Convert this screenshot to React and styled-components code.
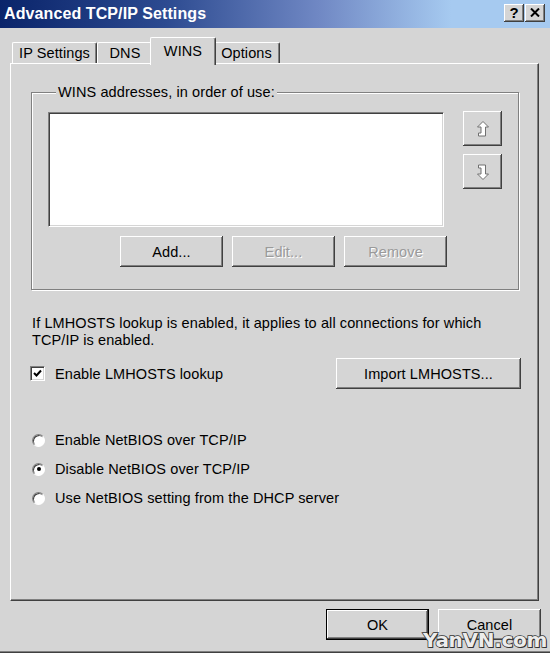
import React, { useState } from "react";
import styled, { createGlobalStyle } from "styled-components";

const GlobalStyle = createGlobalStyle`
  body {
    margin: 0;
    background: #d5d5d5;
  }
`;

const Window = styled.div`
  position: relative;
  width: 550px;
  height: 653px;
  box-sizing: border-box;
  background: #d5d5d5;
  font-family: "Liberation Sans", Arial, sans-serif;
  font-size: 14.5px;
  letter-spacing: 0.1px;
  color: #000;
  display: flex;
  flex-direction: column;
  box-shadow: inset 0 -1px 0 #404040, inset 0 -2px 0 #808080;
  overflow: hidden;
`;

const TitleBar = styled.div`
  height: 28px;
  flex-shrink: 0;
  display: flex;
  align-items: center;
  justify-content: space-between;
  padding: 0 5px 0 4px;
  background: linear-gradient(90deg, #0a246a 0%, #2c4a90 30%, #7088c4 58%, #a6caf0 82%, #a6caf0 100%);
`;

const Title = styled.span`
  color: #fff;
  font-weight: bold;
  font-size: 16px;
  letter-spacing: 0.1px;
`;

const CaptionButtons = styled.div`
  display: flex;
  align-items: center;
  margin-top: -3px;
`;

const CaptionButton = styled.button`
  width: 20px;
  height: 18px;
  padding: 0;
  margin-left: ${(p) => (p.$gap ? "1px" : "0")};
  border: none;
  background: #d5d5d5;
  box-shadow: inset -1px -1px 0 #404040, inset 1px 1px 0 #fff,
    inset -2px -2px 0 #808080;
  display: flex;
  align-items: center;
  justify-content: center;
  font-family: "Liberation Sans", Arial, sans-serif;
  font-weight: bold;
  font-size: 15px;
  color: #000;
`;

const Body = styled.div`
  flex: 1;
  display: flex;
  flex-direction: column;
  padding: 9px 10px 0 10px;
`;

const TabStrip = styled.div`
  height: 26px;
  display: flex;
  align-items: flex-end;
  padding-left: 2px;
  position: relative;
  z-index: 1;
`;

const Tab = styled.div`
  box-sizing: border-box;
  width: ${(p) => p.$w}px;
  height: ${(p) => (p.$active ? 28 : 21)}px;
  margin: ${(p) => (p.$active ? "0 -2px -2px -2px" : "0")};
  padding: ${(p) => (p.$active ? "2px 0 4px 0" : "0")};
  display: flex;
  align-items: center;
  justify-content: center;
  background: #d5d5d5;
  border-top: 1px solid #fff;
  border-left: ${(p) => (p.$noLeft ? "none" : "1px solid #fff")};
  border-right: ${(p) => (p.$noRight ? "none" : "1px solid #404040")};
  box-shadow: ${(p) => (p.$noRight ? "none" : "inset -1px 0 0 #808080")};
  border-radius: 2px 2px 0 0;
  position: relative;
  z-index: ${(p) => (p.$active ? 2 : 1)};
`;

const Panel = styled.div`
  box-sizing: border-box;
  height: 538px;
  width: 529px;
  border-top: 1px solid #fff;
  border-left: 1px solid #fff;
  border-right: 1px solid #404040;
  border-bottom: 1px solid #404040;
  box-shadow: inset -1px -1px 0 #808080;
  padding: 20px 19px 0 20px;
  display: flex;
  flex-direction: column;
`;

const Group = styled.fieldset`
  margin: 0;
  padding: 12px 15px 22px 16px;
  border: 1px solid #808080;
  box-shadow: inset 1px 1px 0 #fff, 1px 1px 0 #fff;
  min-width: 0;
`;

const Legend = styled.legend`
  margin-left: 8px;
  padding: 0 2px;
  background: #d5d5d5;
  line-height: 16px;
  position: relative;
`;

const GroupRow = styled.div`
  display: flex;
  gap: 19px;
  align-items: flex-start;
`;

const ListColumn = styled.div`
  display: flex;
  flex-direction: column;
`;

const ListBox = styled.div`
  box-sizing: border-box;
  width: 396px;
  height: 115px;
  background: #fff;
  border-top: 1px solid #808080;
  border-left: 1px solid #808080;
  border-right: 1px solid #fff;
  border-bottom: 1px solid #fff;
  box-shadow: inset 1px 1px 0 #404040, inset -1px -1px 0 #d5d5d5;
`;

const ListButtons = styled.div`
  display: flex;
  justify-content: flex-end;
  gap: 9px;
  margin-top: 9px;
  margin-right: -3px;
`;

const SideButtons = styled.div`
  display: flex;
  flex-direction: column;
  gap: 8px;
  margin-top: -1px;
`;

const Button = styled.button`
  box-sizing: border-box;
  width: ${(p) => p.$w || 103}px;
  height: ${(p) => p.$h || 31}px;
  padding: 0;
  background: #d5d5d5;
  border: ${(p) => (p.$default ? "1px solid #000" : "none")};
  box-shadow: inset -1px -1px 0 #404040, inset 1px 1px 0 #fff,
    inset -2px -2px 0 #808080;
  font-family: "Liberation Sans", Arial, sans-serif;
  font-size: 14.5px;
  letter-spacing: 0.1px;
  color: ${(p) => (p.$disabled ? "#9a9a9a" : "#000")};
  text-shadow: ${(p) => (p.$disabled ? "1px 1px 0 #fff" : "none")};
  display: flex;
  align-items: center;
  justify-content: center;
`;

const Note = styled.p`
  margin: 25px 0 0 1px;
  line-height: 17px;
`;

const CheckRow = styled.div`
  display: flex;
  align-items: center;
  justify-content: space-between;
  margin-top: 9px;
  margin-right: -2px;
`;

const Option = styled.label`
  display: flex;
  align-items: center;
  gap: 10px;
  height: 20px;
`;

const CheckBox = styled.span`
  box-sizing: border-box;
  width: 15px;
  height: 15px;
  margin-left: -1px;
  background: #fff;
  border-top: 1px solid #808080;
  border-left: 1px solid #808080;
  border-right: 1px solid #fff;
  border-bottom: 1px solid #fff;
  box-shadow: inset 1px 1px 0 #404040, inset -1px -1px 0 #d5d5d5;
  display: flex;
  align-items: center;
  justify-content: center;
`;

const Radios = styled.div`
  display: flex;
  flex-direction: column;
  gap: 9px;
  margin-top: 41px;
  padding-left: 1px;
`;

const RadioDot = styled.span`
  box-sizing: border-box;
  width: 13px;
  height: 13px;
  border-radius: 50%;
  background: #fff;
  border: 1px solid;
  border-color: #808080 #fff #fff #808080;
  box-shadow: inset 1px 1px 0 #404040;
  display: flex;
  align-items: center;
  justify-content: center;
  &::after {
    content: "";
    width: 4px;
    height: 4px;
    border-radius: 50%;
    background: ${(p) => (p.$checked ? "#000" : "transparent")};
  }
`;

const Footer = styled.div`
  display: flex;
  justify-content: flex-end;
  gap: 9px;
  margin-top: 8px;
  margin-right: -1px;
`;

const Watermark = styled.div`
  position: absolute;
  right: 3px;
  bottom: 3px;
  font-family: "DejaVu Sans", sans-serif;
  font-weight: bold;
  font-size: 20px;
  line-height: 20px;
  letter-spacing: -0.3px;
  color: #ececec;
  -webkit-text-stroke: 1.5px #333;
  paint-order: stroke fill;
  text-shadow: 1px 1px 0 #333;
  pointer-events: none;
`;

const UpIcon = () => (
  <svg width="18" height="18" viewBox="0 0 18 18">
    <polygon
      points="9,1.5 14.5,7 11.5,7 11.5,16 4.5,16 4.5,13 7,13 7,7 3.5,7"
      fill="#fff"
      stroke="#707070"
      strokeWidth="1"
    />
  </svg>
);

const DownIcon = () => (
  <svg width="18" height="18" viewBox="0 0 18 18">
    <polygon
      points="4.5,2 11.5,2 11.5,11 14.5,11 9,16.5 3.5,11 7,11 7,5 4.5,5"
      fill="#fff"
      stroke="#707070"
      strokeWidth="1"
    />
  </svg>
);

const tabs = [
  { label: "IP Settings", w: 85 },
  { label: "DNS", w: 55, noRight: true },
  { label: "WINS", w: 66, active: true },
  { label: "Options", w: 66, noLeft: true },
];

const netbios = [
  "Enable NetBIOS over TCP/IP",
  "Disable NetBIOS over TCP/IP",
  "Use NetBIOS setting from the DHCP server",
];

export default function App() {
  const [choice, setChoice] = useState(1);
  const [lmhosts, setLmhosts] = useState(true);

  return (
    <Window>
      <GlobalStyle />
      <TitleBar>
        <Title>Advanced TCP/IP Settings</Title>
        <CaptionButtons>
          <CaptionButton>?</CaptionButton>
          <CaptionButton $gap>
            <svg width="10" height="9" viewBox="0 0 10 9">
              <path d="M1 0.5 L9 8.5 M9 0.5 L1 8.5" stroke="#000" strokeWidth="2" />
            </svg>
          </CaptionButton>
        </CaptionButtons>
      </TitleBar>
      <Body>
        <TabStrip>
          {tabs.map((t) => (
            <Tab
              key={t.label}
              $w={t.w}
              $active={t.active}
              $noRight={t.noRight}
              $noLeft={t.noLeft}
            >
              {t.label}
            </Tab>
          ))}
        </TabStrip>
        <Panel>
          <Group>
            <Legend>WINS addresses, in order of use:</Legend>
            <GroupRow>
              <ListColumn>
                <ListBox />
                <ListButtons>
                  <Button>Add...</Button>
                  <Button $disabled>Edit...</Button>
                  <Button $disabled>Remove</Button>
                </ListButtons>
              </ListColumn>
              <SideButtons>
                <Button $w={39} $h={35}>
                  <UpIcon />
                </Button>
                <Button $w={39} $h={35}>
                  <DownIcon />
                </Button>
              </SideButtons>
            </GroupRow>
          </Group>
          <Note>
            If LMHOSTS lookup is enabled, it applies to all connections for which
            <br />
            TCP/IP is enabled.
          </Note>
          <CheckRow>
            <Option onClick={() => setLmhosts(!lmhosts)}>
              <CheckBox>
                {lmhosts && (
                  <svg width="9" height="9" viewBox="0 0 9 9">
                    <path d="M1 4 L3.5 6.5 L8 1.5" fill="none" stroke="#000" strokeWidth="2" />
                  </svg>
                )}
              </CheckBox>
              Enable LMHOSTS lookup
            </Option>
            <Button $w={185}>Import LMHOSTS...</Button>
          </CheckRow>
          <Radios>
            {netbios.map((label, i) => (
              <Option key={label} onClick={() => setChoice(i)}>
                <RadioDot $checked={choice === i} />
                {label}
              </Option>
            ))}
          </Radios>
        </Panel>
        <Footer>
          <Button $default>OK</Button>
          <Button>Cancel</Button>
        </Footer>
      </Body>
      <Watermark>YanVN.com</Watermark>
    </Window>
  );
}
